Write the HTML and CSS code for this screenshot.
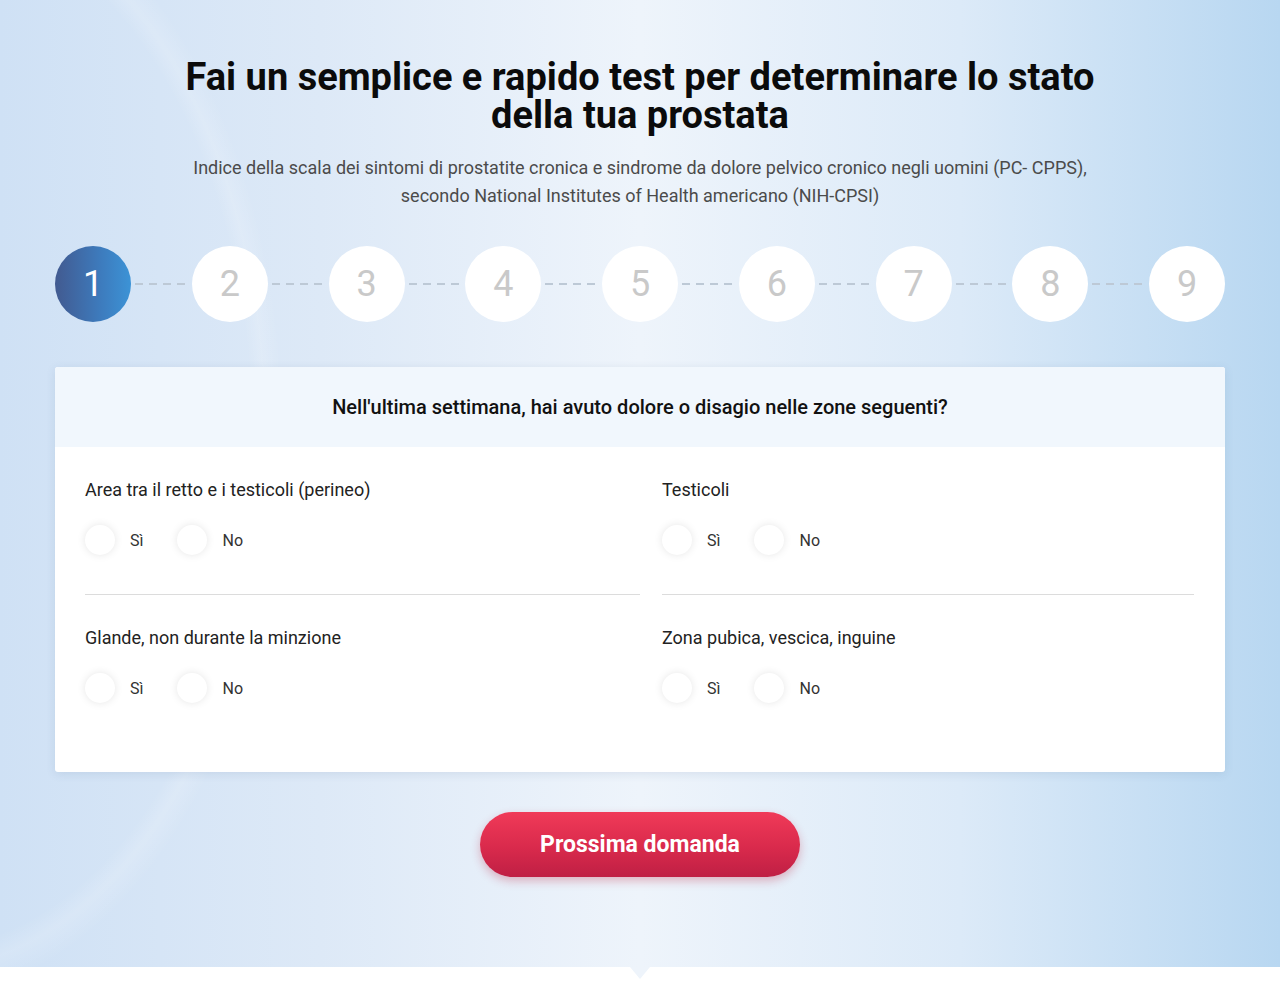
FILE: index.html
```html
<!DOCTYPE html>
<html lang="it">
<head>
<meta charset="utf-8">
<title>Test prostata</title>
<link rel="stylesheet" href="styles.css">
</head>
<body>
<section class="hero">
  <h1 class="title">Fai un semplice e rapido test per determinare lo stato della tua prostata</h1>
  <p class="subtitle">Indice della scala dei sintomi di prostatite cronica e sindrome da dolore pelvico cronico negli uomini (PC- CPPS),<br>secondo National Institutes of Health americano (NIH-CPSI)</p>

  <div class="steps">
    <div class="step active">1</div><div class="dash"></div>
    <div class="step">2</div><div class="dash"></div>
    <div class="step">3</div><div class="dash"></div>
    <div class="step">4</div><div class="dash"></div>
    <div class="step">5</div><div class="dash"></div>
    <div class="step">6</div><div class="dash"></div>
    <div class="step">7</div><div class="dash"></div>
    <div class="step">8</div><div class="dash"></div>
    <div class="step">9</div>
  </div>

  <div class="card">
    <div class="card-head">Nell'ultima settimana, hai avuto dolore o disagio nelle zone seguenti?</div>
    <div class="card-body">
      <div class="item bordered">
        <div class="label">Area tra il retto e i testicoli (perineo)</div>
        <div class="options">
          <label class="opt"><span class="radio"></span>Sì</label>
          <label class="opt"><span class="radio"></span>No</label>
        </div>
      </div>
      <div class="item bordered">
        <div class="label">Testicoli</div>
        <div class="options">
          <label class="opt"><span class="radio"></span>Sì</label>
          <label class="opt"><span class="radio"></span>No</label>
        </div>
      </div>
      <div class="item">
        <div class="label">Glande, non durante la minzione</div>
        <div class="options">
          <label class="opt"><span class="radio"></span>Sì</label>
          <label class="opt"><span class="radio"></span>No</label>
        </div>
      </div>
      <div class="item">
        <div class="label">Zona pubica, vescica, inguine</div>
        <div class="options">
          <label class="opt"><span class="radio"></span>Sì</label>
          <label class="opt"><span class="radio"></span>No</label>
        </div>
      </div>
    </div>
  </div>

  <div class="actions">
    <button class="next">Prossima domanda</button>
  </div>
</section>
<section class="bottom"></section>
</body>
</html>
```

FILE: styles.css
```css
* { box-sizing: border-box; }
html, body { margin: 0; padding: 0; }
body {
  font-family: Roboto, "Liberation Sans", Arial, sans-serif;
  background: #fff;
  color: #222;
}
.hero {
  height: 967px;
  padding: 58px 55px 0;
  background:
    radial-gradient(ellipse 460px 720px at -80px 430px, rgba(255,255,255,0) 72%, rgba(255,255,255,0.16) 75%, rgba(255,255,255,0) 79%),
    linear-gradient(90deg, #cfe1f5 0%, #dde9f7 25%, #eef4fb 50%, #dceaf8 75%, #b8d7f1 100%);
  position: relative;
}
.title {
  margin: 0 auto;
  max-width: 960px;
  text-align: center;
  font-size: 38px;
  line-height: 38px;
  font-weight: 700;
  color: #0b0b0b;
}
.subtitle {
  margin: 20px 0 0;
  text-align: center;
  font-size: 18px;
  line-height: 28px;
  color: #4b4b4b;
}
.steps {
  margin-top: 36px;
  display: flex;
  align-items: center;
}
.step {
  width: 76px;
  height: 76px;
  flex: none;
  border-radius: 50%;
  background: #fff;
  color: #c9c9c9;
  font-size: 36px;
  display: flex;
  align-items: center;
  justify-content: center;
}
.step.active {
  background: linear-gradient(90deg, #425a90 0%, #3d7bbd 60%, #3c93d6 100%);
  color: #fff;
}
.dash {
  flex: 1;
  height: 2px;
  margin: 0 4px;
  background: repeating-linear-gradient(90deg, #bdc9d6 0 8px, transparent 8px 14px);
}
.card {
  margin-top: 45px;
  background: #fff;
  border-radius: 3px;
  box-shadow: 0 2px 10px rgba(60, 90, 130, 0.12);
  overflow: hidden;
}
.card-head {
  height: 80px;
  background: #f1f7fd;
  display: flex;
  align-items: center;
  justify-content: center;
  font-size: 20px;
  font-weight: 500;
  color: #111;
}
.card-body {
  display: grid;
  grid-template-columns: 555px 532px;
  column-gap: 22px;
  padding: 0 31px 30px 30px;
}
.item {
  padding-top: 32px;
  padding-bottom: 39px;
}
.item.bordered { border-bottom: 1px solid #dcdcdc; }
.label {
  font-size: 18px;
  line-height: 22px;
  color: #222;
}
.options {
  margin-top: 24px;
  display: flex;
  gap: 34px;
}
.opt {
  display: flex;
  align-items: center;
  gap: 15px;
  font-size: 16px;
  color: #333;
}
.radio {
  width: 30px;
  height: 30px;
  border-radius: 50%;
  background: #fff;
  box-shadow: 0 0 8px rgba(0, 0, 0, 0.1);
}
.actions {
  margin-top: 40px;
  display: flex;
  justify-content: center;
}
.next {
  width: 320px;
  height: 65px;
  border: none;
  border-radius: 33px;
  background: linear-gradient(180deg, #f03a58 0%, #d92a4c 55%, #bf1f44 100%);
  box-shadow: 0 4px 10px rgba(190, 30, 60, 0.3);
  color: #fff;
  font-family: Roboto, "Liberation Sans", Arial, sans-serif;
  font-size: 23px;
  font-weight: 700;
}
.bottom {
  height: 33px;
  background: #fff;
  position: relative;
}
.bottom::before {
  content: "";
  position: absolute;
  left: 630px;
  top: 0;
  border-left: 10px solid transparent;
  border-right: 10px solid transparent;
  border-top: 12px solid #eef4fb;
}
```
